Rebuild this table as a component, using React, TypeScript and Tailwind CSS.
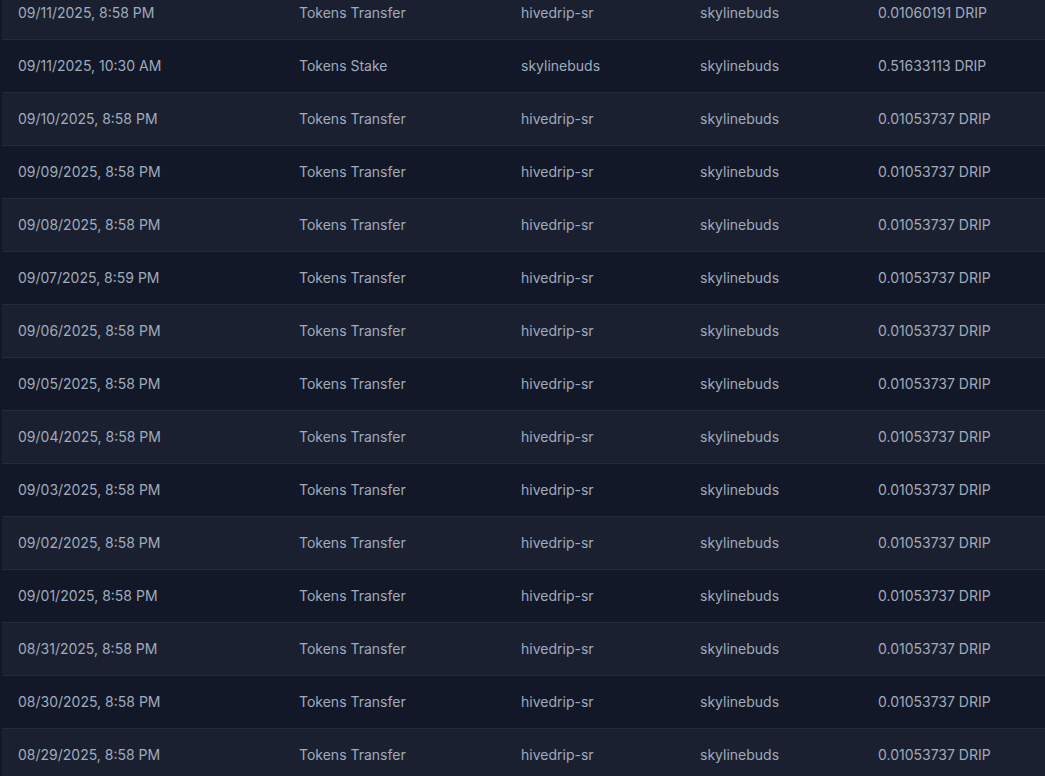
const rows: [string, string, string, string, string][] = [
  ["09/11/2025, 8:58 PM", "Tokens Transfer", "hivedrip-sr", "skylinebuds", "0.01060191 DRIP"],
  ["09/11/2025, 10:30 AM", "Tokens Stake", "skylinebuds", "skylinebuds", "0.51633113 DRIP"],
  ["09/10/2025, 8:58 PM", "Tokens Transfer", "hivedrip-sr", "skylinebuds", "0.01053737 DRIP"],
  ["09/09/2025, 8:58 PM", "Tokens Transfer", "hivedrip-sr", "skylinebuds", "0.01053737 DRIP"],
  ["09/08/2025, 8:58 PM", "Tokens Transfer", "hivedrip-sr", "skylinebuds", "0.01053737 DRIP"],
  ["09/07/2025, 8:59 PM", "Tokens Transfer", "hivedrip-sr", "skylinebuds", "0.01053737 DRIP"],
  ["09/06/2025, 8:58 PM", "Tokens Transfer", "hivedrip-sr", "skylinebuds", "0.01053737 DRIP"],
  ["09/05/2025, 8:58 PM", "Tokens Transfer", "hivedrip-sr", "skylinebuds", "0.01053737 DRIP"],
  ["09/04/2025, 8:58 PM", "Tokens Transfer", "hivedrip-sr", "skylinebuds", "0.01053737 DRIP"],
  ["09/03/2025, 8:58 PM", "Tokens Transfer", "hivedrip-sr", "skylinebuds", "0.01053737 DRIP"],
  ["09/02/2025, 8:58 PM", "Tokens Transfer", "hivedrip-sr", "skylinebuds", "0.01053737 DRIP"],
  ["09/01/2025, 8:58 PM", "Tokens Transfer", "hivedrip-sr", "skylinebuds", "0.01053737 DRIP"],
  ["08/31/2025, 8:58 PM", "Tokens Transfer", "hivedrip-sr", "skylinebuds", "0.01053737 DRIP"],
  ["08/30/2025, 8:58 PM", "Tokens Transfer", "hivedrip-sr", "skylinebuds", "0.01053737 DRIP"],
  ["08/29/2025, 8:58 PM", "Tokens Transfer", "hivedrip-sr", "skylinebuds", "0.01053737 DRIP"],
];

export default function App() {
  return (
    <div
      className="h-[776px] overflow-hidden bg-[#111827] pl-[2px] text-[14px] text-[#a0abbd]"
      style={{ fontFamily: "Inter, 'Noto Sans', sans-serif" }}
    >
      <div className="-mt-[14px] w-[1100px]">
        {rows.map((r, i) => (
          <div
            key={i}
            className={`grid h-[53px] grid-cols-[281px_222px_179px_178px_1fr] items-center border-t border-[#232c3b] pb-[2px] ${
              i % 2 === 0 ? "bg-[#1a2030]" : "bg-[#121827]"
            }`}
          >
            {r.map((c, j) => (
              <div key={j} className="px-4 whitespace-nowrap">
                {c}
              </div>
            ))}
          </div>
        ))}
      </div>
    </div>
  );
}
